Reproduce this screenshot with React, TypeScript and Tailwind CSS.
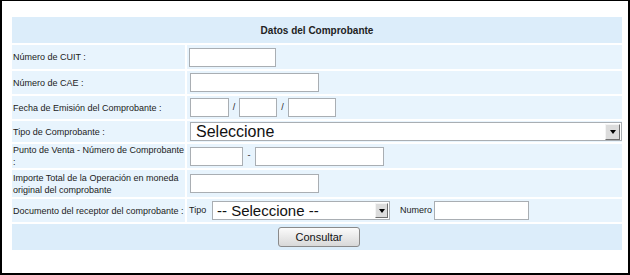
import React from "react";

function TextBox({ className }: { className: string }) {
  return <div className={`h-[19px] shrink-0 border border-[#a9aeb3] bg-white ${className}`} />;
}

function DropArrow({ className }: { className: string }) {
  return (
    <div
      className={`flex items-center justify-center border border-t-[#f4f4f4] border-l-[#f4f4f4] border-r-[#6f6f6f] border-b-[#6f6f6f] bg-[#dcdcdc] ${className}`}
    >
      <div className="h-0 w-0 border-x-[3px] border-t-[4px] border-x-transparent border-t-black" />
    </div>
  );
}

function Select({
  className,
  text,
  textClass,
  arrowClass,
}: {
  className: string;
  text: string;
  textClass: string;
  arrowClass: string;
}) {
  return (
    <div className={`flex h-[19px] shrink-0 items-center border border-[#a9aeb3] bg-white ${className}`}>
      <span className={`flex-1 whitespace-nowrap text-[#111] ${textClass}`}>{text}</span>
      <DropArrow className={arrowClass} />
    </div>
  );
}

function Label({ children }: { children: React.ReactNode }) {
  return (
    <div className="flex items-center bg-[#e8f4fd] pl-[1px] text-[9px] leading-[12px] text-[#222]">
      <span>{children}</span>
    </div>
  );
}

function Cell({ children }: { children: React.ReactNode }) {
  return <div className="flex items-center bg-[#e8f4fd] pl-[3px]">{children}</div>;
}

export default function App() {
  return (
    <div className="h-[275px] w-[630px] border-x-2 border-b-2 border-t border-black bg-white pl-[10px] pt-[16px] font-['Liberation_Sans',Arial,sans-serif]">
      <div className="grid w-[610px] grid-cols-[173px_435px] grid-rows-[26px_24px_23px_23px_21px_24px_27px_23px_26px] gap-[2px]">
        <div className="col-span-2 flex items-center justify-center bg-[#dcedfa] text-[10px] font-bold text-[#222]">
          Datos del Comprobante
        </div>

        <Label>Número de CUIT :</Label>
        <Cell>
          <TextBox className="-ml-px w-[87px]" />
        </Cell>

        <Label>Número de CAE :</Label>
        <Cell>
          <TextBox className="w-[129px]" />
        </Cell>

        <Label>Fecha de Emisión del Comprobante :</Label>
        <Cell>
          <TextBox className="w-[39px]" />
          <span className="w-[10px] text-center text-[9px] text-[#222]">/</span>
          <TextBox className="w-[38px]" />
          <span className="w-[11px] text-center text-[9px] text-[#222]">/</span>
          <TextBox className="w-[48px]" />
        </Cell>

        <Label>Tipo de Comprobante :</Label>
        <Cell>
          <Select
            className="w-[432px]"
            text="Seleccione"
            textClass="pl-[5px] text-[16px] leading-[17px]"
            arrowClass="mr-px h-[16px] w-[15px]"
          />
        </Cell>

        <Label>Punto de Venta - Número de Comprobante :</Label>
        <Cell>
          <TextBox className="w-[53px]" />
          <span className="w-[12px] text-center text-[9px] text-[#222]">-</span>
          <TextBox className="w-[129px]" />
        </Cell>

        <Label>Importe Total de la Operación en moneda original del comprobante</Label>
        <Cell>
          <TextBox className="w-[129px]" />
        </Cell>

        <Label>Documento del receptor del comprobante :</Label>
        <Cell>
          <span className="-ml-px w-[23px] text-[9px] text-[#222]">Tipo</span>
          <Select
            className="w-[178px]"
            text="-- Seleccione --"
            textClass="pl-[4px] text-[15px] leading-[17px]"
            arrowClass="mr-px h-[15px] w-[13px]"
          />
          <span className="ml-[10px] w-[34px] text-[9px] text-[#222]">Numero</span>
          <TextBox className="w-[95px]" />
        </Cell>

        <div className="col-span-2 flex items-center justify-center bg-[#dcedfa] pl-[4px]">
          <button className="flex h-[20px] w-[82px] items-center justify-center rounded-[3px] border border-[#8a8a8a] bg-gradient-to-b from-[#fbfbfb] to-[#d8d8d8] text-[11px] text-[#111]">
            Consultar
          </button>
        </div>
      </div>
    </div>
  );
}
